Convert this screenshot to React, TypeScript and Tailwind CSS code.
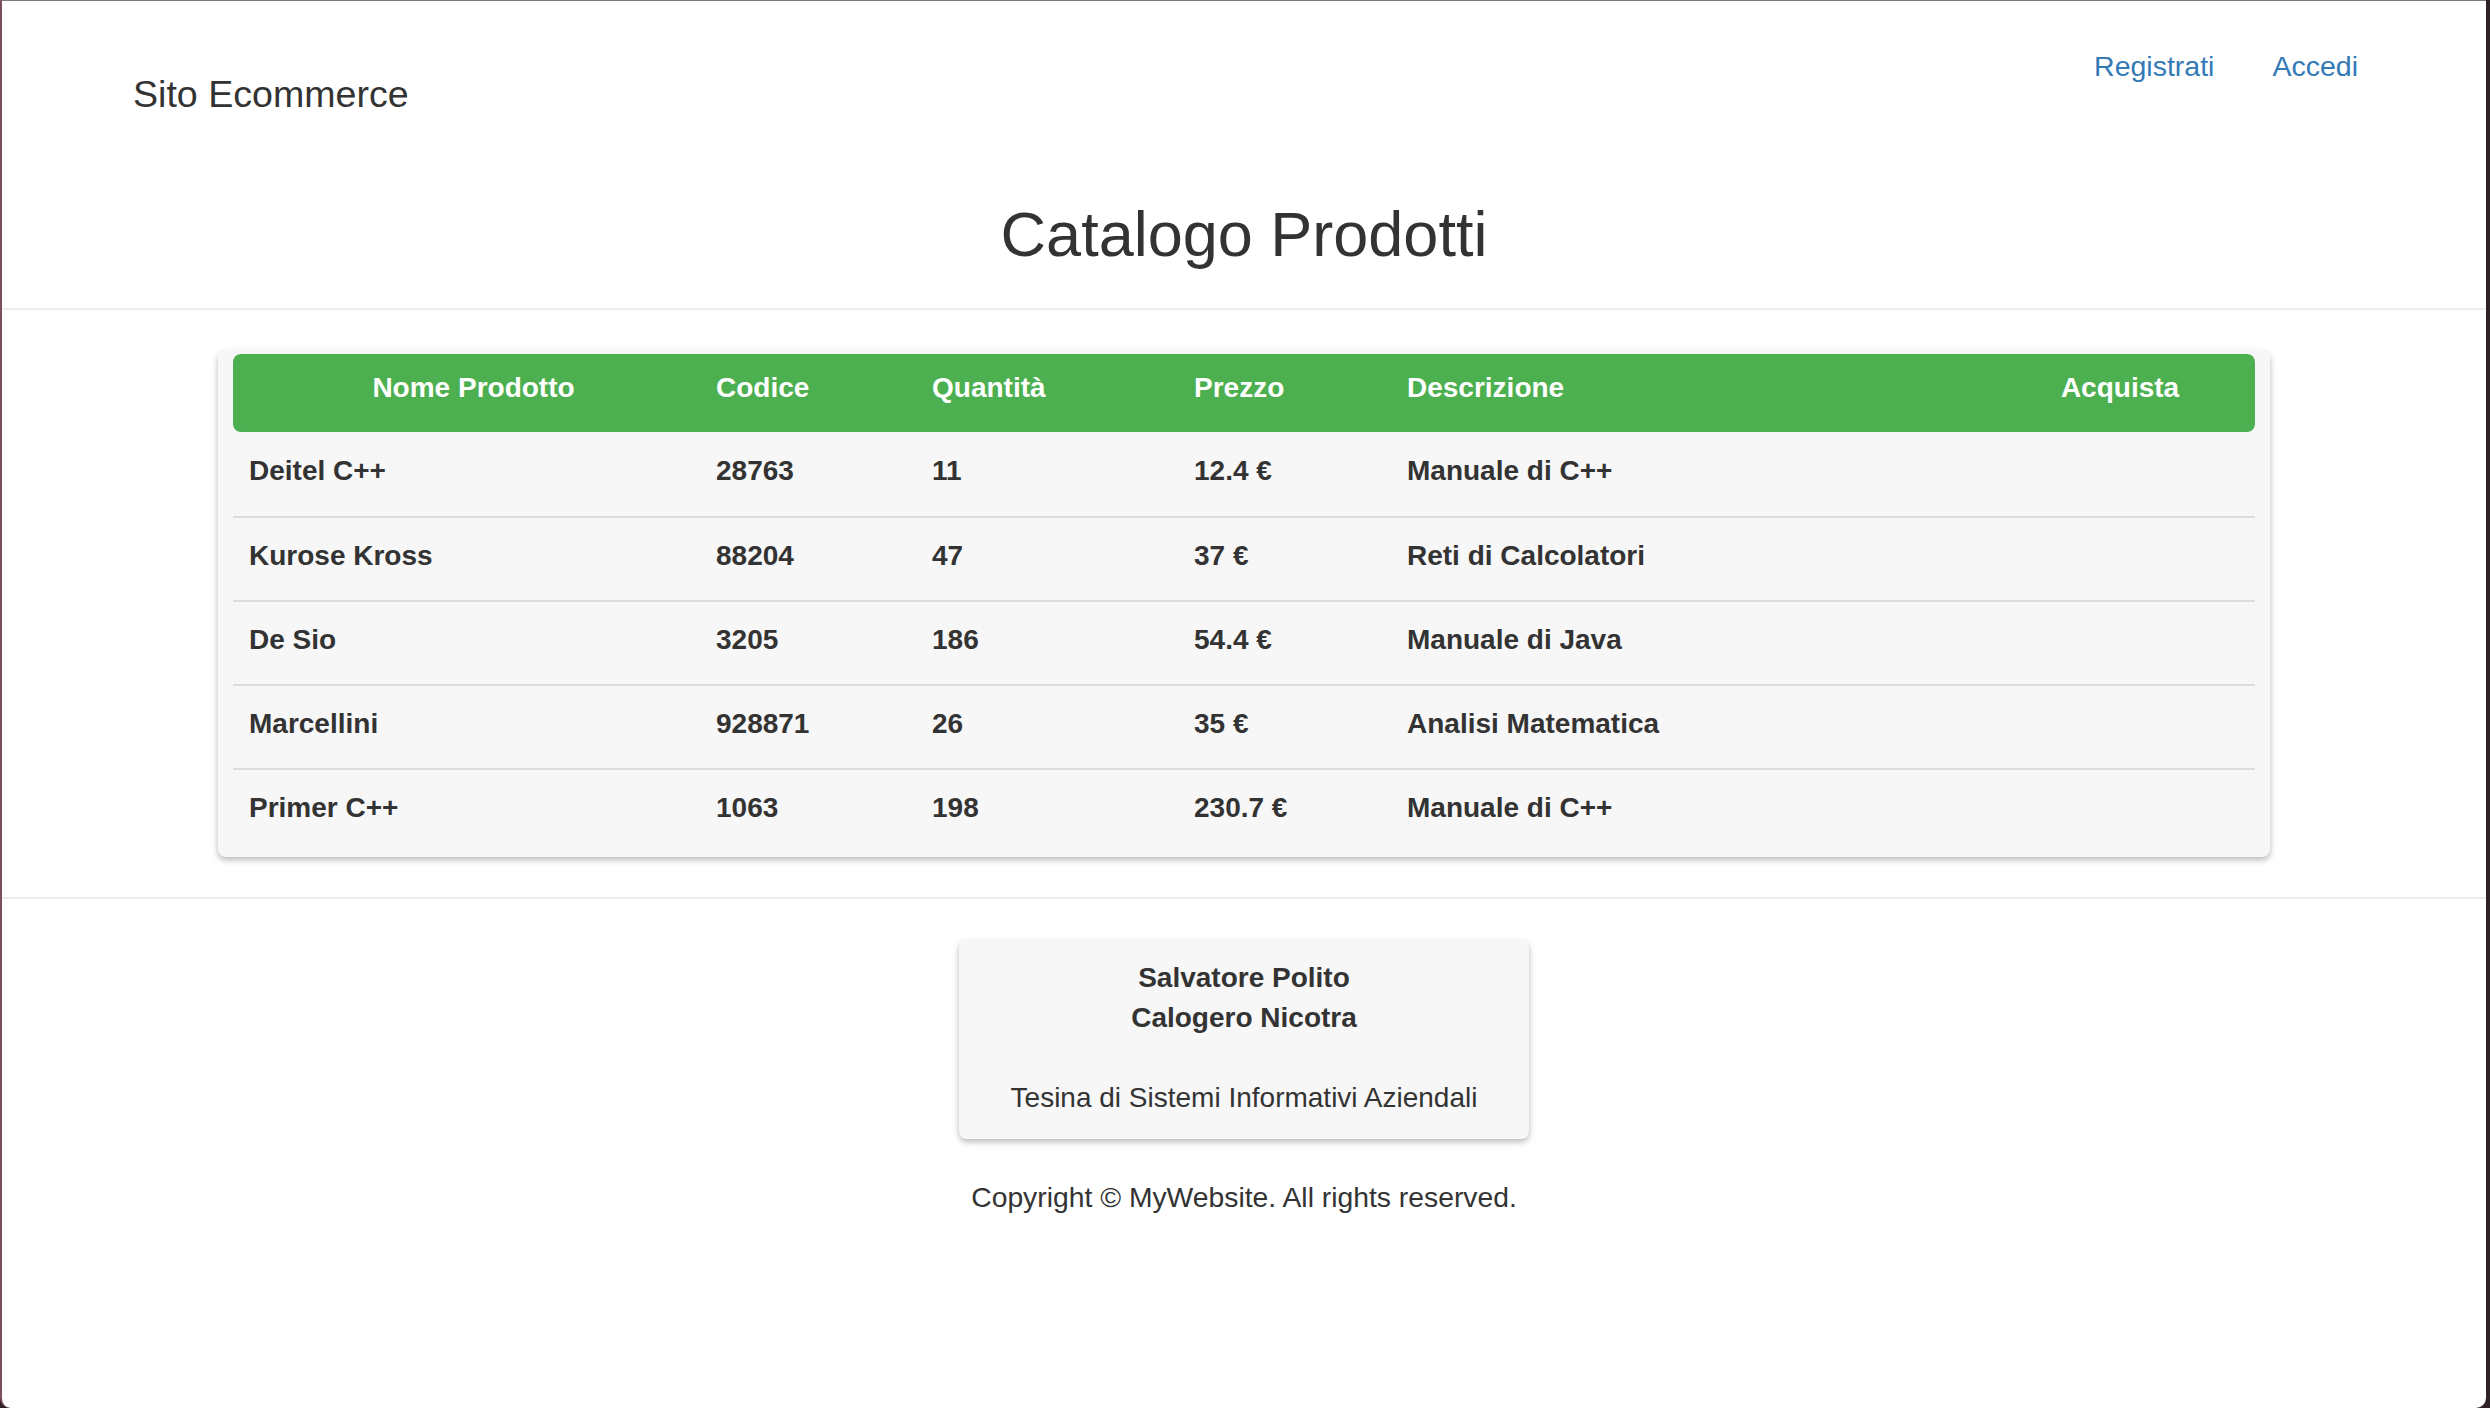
const products = [
  { nome: 'Deitel C++', codice: '28763', quantita: '11', prezzo: '12.4 €', descrizione: 'Manuale di C++' },
  { nome: 'Kurose Kross', codice: '88204', quantita: '47', prezzo: '37 €', descrizione: 'Reti di Calcolatori' },
  { nome: 'De Sio', codice: '3205', quantita: '186', prezzo: '54.4 €', descrizione: 'Manuale di Java' },
  { nome: 'Marcellini', codice: '928871', quantita: '26', prezzo: '35 €', descrizione: 'Analisi Matematica' },
  { nome: 'Primer C++', codice: '1063', quantita: '198', prezzo: '230.7 €', descrizione: 'Manuale di C++' },
]

const cols = 'grid grid-cols-[481px_216px_262px_213px_580px_270px]'

export default function App() {
  return (
    <div className="h-[1408px] w-[2490px] overflow-hidden bg-[#2e2226] pr-[4px] font-['Liberation_Sans',Arial,sans-serif] text-[#333]">
      <div className="h-full overflow-hidden rounded-b-[10px] border-l-2 border-t border-l-[#7a4e5a] border-t-[#7a7a72] bg-white">
        <header className="flex justify-between pl-[131px] pr-[128px]">
          <div className="pt-[74px] text-[37.6px] leading-[38px]">Sito Ecommerce</div>
          <nav className="flex gap-[58px] pt-[51px] text-[28.5px] leading-[29px] text-[#337ab7]">
            <a href="#">Registrati</a>
            <a href="#">Accedi</a>
          </nav>
        </header>

        <div className="border-b-2 border-[#eeeeee] pb-[42px] pt-[90px]">
          <h1 className="text-center text-[63px] leading-[63px]">Catalogo Prodotti</h1>
        </div>

        <main className="border-b-2 border-[#eeeeee] px-[216px] pb-[40px] pt-[40px]">
          <div className="rounded-[8px] bg-[#f7f7f7] px-[15px] pb-[5px] pt-[4px] shadow-[0_3px_6px_rgba(0,0,0,0.28)]">
            <div className={`${cols} h-[78px] rounded-[8px] bg-[#4caf50] pt-[20px] text-[28px] font-bold leading-[28px] text-white`}>
              <div className="text-center">Nome Prodotto</div>
              <div className="px-[2px]">Codice</div>
              <div className="px-[2px]">Quantità</div>
              <div className="px-[2px]">Prezzo</div>
              <div className="px-[2px]">Descrizione</div>
              <div className="text-center">Acquista</div>
            </div>
            {products.map((p, i) => (
              <div
                key={p.nome}
                className={`${cols} h-[84px] items-center pb-[7px] text-[28px] font-bold leading-[28px] ${i > 0 ? 'border-t-2 border-[#dddddd]' : ''}`}
              >
                <div className="px-[16px]">{p.nome}</div>
                <div className="px-[2px]">{p.codice}</div>
                <div className="px-[2px]">{p.quantita}</div>
                <div className="px-[2px]">{p.prezzo}</div>
                <div className="px-[2px]">{p.descrizione}</div>
                <div />
              </div>
            ))}
          </div>
        </main>

        <footer className="flex flex-col items-center pt-[41px]">
          <div className="w-[570px] rounded-[8px] bg-[#f7f7f7] pb-[21px] pt-[18px] text-center text-[28px] leading-[40px] shadow-[0_3px_6px_rgba(0,0,0,0.28)]">
            <div className="font-bold">Salvatore Polito</div>
            <div className="font-bold">Calogero Nicotra</div>
            <div className="h-[40px]" />
            <div>Tesina di Sistemi Informativi Aziendali</div>
          </div>
          <p className="pt-[38px] text-[28.3px] leading-[40px]">Copyright © MyWebsite. All rights reserved.</p>
        </footer>
      </div>
    </div>
  )
}
